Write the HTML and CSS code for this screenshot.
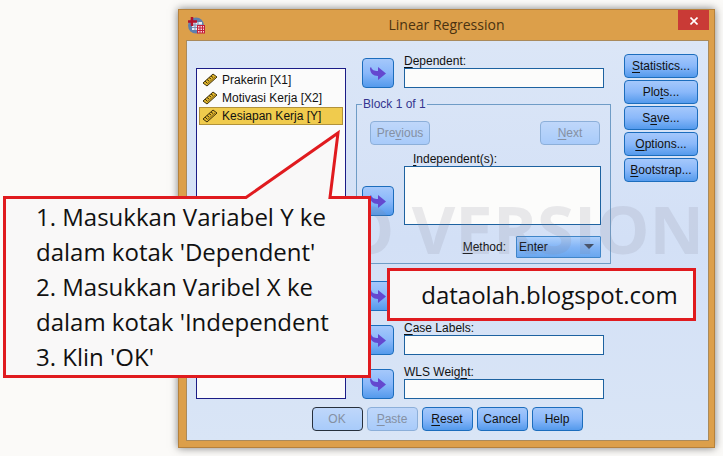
FILE: index.html
```
<!DOCTYPE html>
<html lang="id">
<head>
    <meta charset="UTF-8">
    <meta name="viewport" content="width=device-width, initial-scale=1.0">
    <title>Linear Regression</title>
    <link rel="stylesheet" href="styles.css">
</head>
<body>
    <!-- shared icons -->
    <svg class="sprite" aria-hidden="true">
        <symbol id="arrow" viewBox="0 0 16 14">
            <path d="M1 1 C2 4 4 5 8 5 V1 L16 7.500 L8 14 V10 C3 10 0 7 0 2 Z" fill="#6448cf"/>
        </symbol>
        <symbol id="ruler" viewBox="0 0 16 14">
            <path d="M1 10 L11 1 L15 4 L5 13 Z" fill="#e2b62c" stroke="#3d300c" stroke-linejoin="round"/>
            <path d="M3 8 L5 10 M5 6.500 L7 8 M7 4.500 L9 6 M9 3 L11 4.500" stroke="#3d300c"/>
            <path d="M5 11 L13 4" stroke="#8a6c18"/>
        </symbol>
    </svg>

    <div class="window">
        <div class="titlebar">
            <svg class="app-icon" viewBox="0 0 17 17">
                <circle cx="8" cy="8.500" r="8" fill="#5f7fae"/>
                <path d="M4 5 H14 V13 H4 Z" fill="#e6ecf5"/>
                <path d="M4 8 H14 M4 10.500 H14 M7 5 V13 M10 5 V13" stroke="#7d90b5"/>
                <path d="M4 0 V9 M0 4.500 H9" stroke="#b3122b" stroke-width="2.500"/>
                <path d="M9 9 H17 V16 H9 Z" fill="#f3d3d6"/>
                <path d="M9 8.500 H17 M9 11 H17 M9 13.500 H17 M9 16 H17 M9.500 8 V16 M12 8 V16 M14.500 8 V16 M16.500 8 V16" stroke="#c41e3a"/>
            </svg>
            <h1>Linear Regression</h1>
            <button class="close" aria-label="Close">
                <svg viewBox="0 0 8 8"><path d="M0.500 0.500 L7.500 7.500 M7.500 0.500 L0.500 7.500" stroke="#fff" stroke-width="1.600"/></svg>
            </button>
        </div>

        <div class="content">
            <div class="columns">
                <ul class="variables" role="listbox" aria-label="Variables">
                    <li role="option"><svg><use href="#ruler"/></svg>Prakerin [X1]</li>
                    <li role="option"><svg><use href="#ruler"/></svg>Motivasi Kerja [X2]</li>
                    <li role="option" class="selected" aria-selected="true"><svg><use href="#ruler"/></svg>Kesiapan Kerja [Y]</li>
                </ul>

                <div class="fields">
                    <div class="field">
                        <button class="btn move" aria-label="Move to Dependent"><svg><use href="#arrow"/></svg></button>
                        <div class="entry">
                            <label for="dependent"><u>D</u>ependent:</label>
                            <input type="text" id="dependent">
                        </div>
                    </div>

                    <fieldset class="block">
                        <legend>Block 1 of 1</legend>
                        <div class="block-nav">
                            <button class="btn" disabled>Pre<u>v</u>ious</button>
                            <button class="btn" disabled><u>N</u>ext</button>
                        </div>
                        <div class="field independents">
                            <button class="btn move" aria-label="Move to Independent"><svg><use href="#arrow"/></svg></button>
                            <div class="entry">
                                <label for="independent"><u>I</u>ndependent(s):</label>
                                <textarea id="independent"></textarea>
                            </div>
                        </div>
                        <div class="method">
                            <label for="method"><u>M</u>ethod:</label>
                            <div class="dropdown">
                                <select id="method">
                                    <option>Enter</option>
                                </select>
                            </div>
                        </div>
                    </fieldset>

                    <div class="more-fields">
                        <div class="field">
                            <button class="btn move" aria-label="Move to third field"><svg><use href="#arrow"/></svg></button>
                            <div class="entry">
                                <input type="text" aria-label="Third field">
                            </div>
                        </div>
                        <div class="field">
                            <button class="btn move" aria-label="Move to Case Labels"><svg><use href="#arrow"/></svg></button>
                            <div class="entry">
                                <label for="caseLabels"><u>C</u>ase Labels:</label>
                                <input type="text" id="caseLabels">
                            </div>
                        </div>
                        <div class="field">
                            <button class="btn move" aria-label="Move to WLS Weight"><svg><use href="#arrow"/></svg></button>
                            <div class="entry">
                                <label for="wls">WLS Weig<u>h</u>t:</label>
                                <input type="text" id="wls">
                            </div>
                        </div>
                    </div>
                </div>

                <div class="side">
                    <button class="btn"><u>S</u>tatistics...</button>
                    <button class="btn">Plo<u>t</u>s...</button>
                    <button class="btn">S<u>a</u>ve...</button>
                    <button class="btn"><u>O</u>ptions...</button>
                    <button class="btn"><u>B</u>ootstrap...</button>
                </div>
            </div>

            <div class="actions">
                <button class="btn default" disabled>OK</button>
                <button class="btn" disabled><u>P</u>aste</button>
                <button class="btn"><u>R</u>eset</button>
                <button class="btn">Cancel</button>
                <button class="btn">Help</button>
            </div>
            <div class="watermark">DEMO VERSION</div>
        </div>
    </div>

    <div class="note steps">
        1. Masukkan Variabel Y ke<br>
        dalam kotak 'Dependent'<br>
        2. Masukkan Varibel X ke<br>
        dalam kotak 'Independent<br>
        3. Klin 'OK'
        <svg class="tail" viewBox="0 0 100 72">
            <path d="M3 69 L96 3 L88 69 V72 H3 Z" fill="#f9f8f8"/>
            <path d="M0 68.500 H4 L96 4 L88 68.500 H92" fill="none" stroke="#e01b1f" stroke-width="3"/>
        </svg>
    </div>
    <div class="note site">dataolah.blogspot.com</div>
</body>
</html>
```
FILE: styles.css
```
* {
    box-sizing: border-box;
}

body {
    margin: 0;
    padding: 9px 8px 8px 178px;
    background-color: #fbfaf8;
    font-family: "Liberation Sans", Arial, sans-serif;
    font-size: 12px;
    line-height: 14px;
    color: #111;
    position: relative;
}

.sprite {
    display: none;
}

.window {
    background-color: #dc9f4a;
    border: 1px solid #b5813c;
    padding: 0 5px 6px 7px;
    box-shadow: 0 0 8px rgba(0, 0, 0, 0.5);
}

.titlebar {
    display: flex;
    align-items: center;
    height: 30px;
    padding-left: 2px;
}

.titlebar h1 {
    flex: 1;
    margin: 0;
    padding-left: 10px;
    font-family: "Open Sans", "Noto Sans", sans-serif;
    font-size: 14px;
    font-weight: normal;
    text-align: center;
    color: #4a3210;
}

.app-icon {
    width: 17px;
    height: 17px;
}

.close {
    align-self: flex-start;
    width: 31px;
    height: 20px;
    padding: 0;
    border: 0;
    background-color: #c93a36;
}

.close svg {
    width: 8px;
    height: 8px;
}

.content {
    position: relative;
    padding: 13px 10px 9px 9px;
    border: 1px solid #a98a5c;
    background: linear-gradient(#dbe6f7, #d3e0f6 50%, #d9e5f6);
}

.columns {
    display: flex;
}

.variables {
    flex: 0 0 150px;
    margin: 14px 10px 0 0;
    padding: 2px;
    list-style: none;
    background-color: #fbfbfb;
    border: 1px solid #1b1c86;
}

.variables li {
    display: flex;
    align-items: center;
    gap: 4px;
    height: 18px;
    padding-left: 2px;
    border: 1px solid transparent;
}

.variables .selected {
    background-color: #f0cb4d;
    border-color: #b1923a;
}

.variables svg {
    width: 16px;
    height: 14px;
}

.fields {
    flex: 1;
    margin-right: 13px;
}

.field {
    display: flex;
    align-items: flex-end;
    gap: 10px;
    padding: 0 7px 0 6px;
}

.entry {
    flex: 1;
    display: flex;
    flex-direction: column;
}

input,
textarea {
    display: block;
    width: 100%;
    height: 20px;
    padding: 2px;
    border: 1px solid #1d62a0;
    border-radius: 0;
    background-color: #fcfcfb;
    font: inherit;
    resize: none;
}

textarea {
    height: 59px;
}

u {
    text-underline-offset: 2px;
}

.btn {
    width: 100%;
    height: 24px;
    padding: 0;
    border: 1px solid #1c6dbd;
    border-radius: 4px;
    background: linear-gradient(#a5c8fb, #8ab8fa 50%, #549aec);
    font: inherit;
    color: #111;
}

.btn:disabled {
    background: linear-gradient(#bfd7fa, #a8cbfa);
    border-color: #8cafd9;
    color: #8590a3;
}

.btn.default {
    border-color: #27303c;
}

.move {
    flex: 0 0 32px;
    height: 30px;
}

.move svg {
    display: block;
    width: 16px;
    height: 14px;
    margin: 0 auto;
}

.block {
    min-width: 0;
    margin: 9px 0 13px;
    padding: 10px 9px 5px 5px;
    border: 1px solid #6f9cc6;
}

.block legend {
    padding: 0 1px;
    color: #34348f;
}

.block-nav {
    display: flex;
    justify-content: space-between;
    padding: 0 1px 0 8px;
}

.block-nav .btn {
    width: 60px;
}

.independents {
    padding: 0;
    margin: 7px 0 11px;
}

.independents .move {
    margin-bottom: 9px;
}

.independents label {
    padding-left: 9px;
}

.method {
    display: flex;
    justify-content: flex-end;
    align-items: center;
    gap: 10px;
}

.dropdown {
    position: relative;
    width: 85px;
}

.dropdown::after {
    content: "";
    position: absolute;
    top: 8px;
    right: 7px;
    border: 5px solid transparent;
    border-top-color: #414d63;
    border-bottom: 0;
    pointer-events: none;
}

select {
    display: block;
    width: 100%;
    height: 22px;
    padding: 0 2px;
    appearance: none;
    border: 1px solid #3f85c8;
    border-radius: 1px;
    background: linear-gradient(#aed0fc, #83b5f6 50%, #69a7ef);
    font: inherit;
    color: #111;
}

.more-fields {
    display: flex;
    flex-direction: column;
    gap: 10px;
}

.more-fields .field {
    min-height: 34px;
}

.side {
    flex: 0 0 74px;
    display: flex;
    flex-direction: column;
    gap: 2px;
}

.actions {
    display: flex;
    justify-content: center;
    gap: 4px;
    margin-top: 8px;
}

.actions .btn {
    width: 51px;
}

/* sits over the whole dialog */
.watermark {
    position: absolute;
    right: 4px;
    top: 154px;
    font-family: "Open Sans", "Noto Sans", sans-serif;
    font-size: 67px;
    font-weight: bold;
    line-height: 67px;
    color: rgba(130, 130, 150, 0.16);
    white-space: nowrap;
    pointer-events: none;
}

/* red annotations on top of the dialog */
.note {
    position: absolute;
    border: 3px solid #e01b1f;
    background-color: #f9f8f8;
    font-family: "Open Sans", "Noto Sans", sans-serif;
    font-size: 24px;
    line-height: 35px;
    color: #111;
    white-space: nowrap;
}

.steps {
    left: 3px;
    top: 196px;
    width: 368px;
    padding: 0 30px 1px;
}

.site {
    left: 387px;
    top: 268px;
    width: 309px;
    padding: 6px 0 6px 16px;
}

.site {
    text-align: center;
}

.tail {
    position: absolute;
    left: 236px;
    top: -70px;
    width: 100px;
    height: 72px;
}
```
